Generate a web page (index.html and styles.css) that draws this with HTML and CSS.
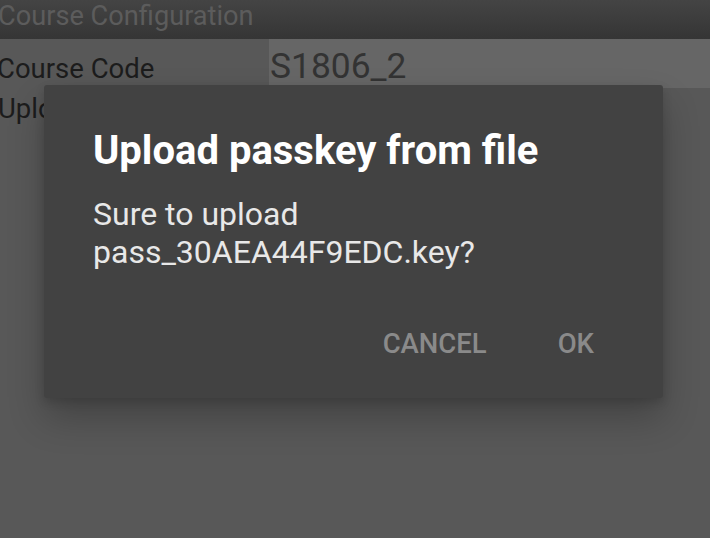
FILE: index.html
```html
<!DOCTYPE html>
<html>
<head>
<meta charset="utf-8">
<link rel="stylesheet" href="styles.css">
</head>
<body>
<div class="screen">
  <div class="appbar"><span class="appbar-title">Course Configuration</span></div>
  <div class="row">
    <div class="label">Course Code</div>
    <div class="field">S1806_2</div>
  </div>
  <div class="row row2">
    <div class="label">Upload Passkey</div>
  </div>
  <div class="dialog">
    <div class="dlg-title">Upload passkey from file</div>
    <div class="dlg-body">Sure to upload<br>pass_30AEA44F9EDC.key?</div>
    <div class="dlg-actions">
      <span class="btn btn-cancel">CANCEL</span>
      <span class="btn">OK</span>
    </div>
  </div>
</div>
</body>
</html>
```
FILE: styles.css
```css
* { box-sizing: border-box; }
html, body { margin: 0; padding: 0; }
body {
  width: 710px;
  height: 538px;
  overflow: hidden;
  background: #585858;
  font-family: Roboto, "Noto Sans", sans-serif;
}
.screen {
  position: relative;
  width: 710px;
  height: 538px;
  overflow: hidden;
  background: #585858;
}
.appbar {
  height: 39px;
  background: linear-gradient(#444444, #353535);
  overflow: hidden;
}
.appbar-title {
  display: block;
  margin-left: -2px;
  margin-top: -3px;
  font-size: 27.2px;
  line-height: 38px;
  color: #5c5c5c;
  white-space: nowrap;
}
.row {
  display: flex;
  height: 49px;
}
.label {
  width: 269px;
  padding-top: 11px;
  margin-left: -3px;
  font-size: 27.5px;
  line-height: 38px;
  color: #1c1c1c;
  white-space: nowrap;
}
.field {
  flex: 1;
  background: #666666;
  padding-top: 8px;
  padding-left: 1px;
  font-size: 35.4px;
  line-height: 38px;
  color: #333333;
  margin-left: 3px;
}
.row2 .label { padding-top: 2px; margin-left: -2px; }
.dialog {
  position: absolute;
  left: 44px;
  top: 85px;
  width: 619px;
  height: 313px;
  background: #424242;
  border-radius: 3px;
  box-shadow: 0 20px 36px rgba(0,0,0,0.24), 0 4px 10px rgba(0,0,0,0.15);
  padding: 0 0 0 49px;
  display: flex;
  flex-direction: column;
}
.dlg-title {
  margin-top: 42px;
  font-size: 40px;
  line-height: 48px;
  font-weight: bold;
  color: #ffffff;
  white-space: nowrap;
}
.dlg-body {
  margin-top: 20px;
  font-size: 32px;
  line-height: 38px;
  color: #e8e8e8;
  white-space: nowrap;
}
.dlg-actions {
  margin-top: 57px;
  display: flex;
  justify-content: flex-end;
  padding-right: 69px;
}
.btn {
  font-size: 27.5px;
  line-height: 32px;
  font-weight: 500;
  color: #8a8a8a;
}
.btn-cancel { margin-right: 71px; }
```
